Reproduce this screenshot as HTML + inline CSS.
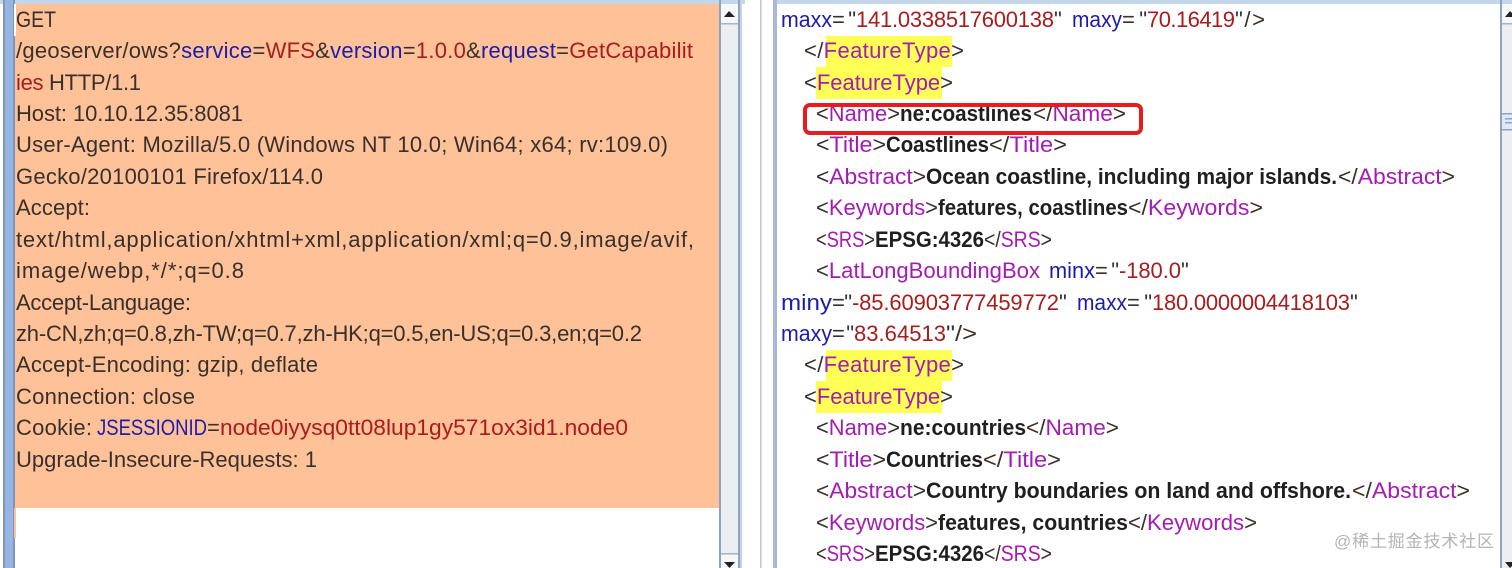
<!DOCTYPE html>
<html><head><meta charset="utf-8"><style>
html,body{margin:0;padding:0;background:#fff;width:1512px;height:568px;overflow:hidden}
svg{display:block;filter:blur(.35px)}
text{font-family:"Liberation Sans",sans-serif;font-size:22px;fill:#38302c}
.n{fill:#1c1caa}.v{fill:#a81c1c}.t{fill:#a41cb4}.b{font-weight:bold;fill:#1f1f1f}
.wm{font-family:"Liberation Sans","Noto Sans CJK SC",sans-serif;font-size:17px;fill:#b4b4b4}
</style></head><body>
<svg width="1512" height="568" viewBox="0 0 1512 568" xmlns="http://www.w3.org/2000/svg">
<rect width="1512" height="568" fill="#fff"/>
<!-- left panel -->
<rect x="0" y="0" width="745" height="4" fill="#c3d6ea"/>
<rect x="3" y="0" width="2" height="568" fill="#8397b4"/>
<rect x="5" y="0" width="8" height="568" fill="#97b5e3"/>
<rect x="13" y="0" width="2" height="568" fill="#7f96b8"/>
<rect x="15" y="4" width="704" height="504" fill="#ffc298"/>
<rect x="15" y="508" width="704" height="60" fill="#fff"/>
<rect x="14" y="508" width="2" height="30" fill="#ffc298"/>
<rect x="14" y="4" width="2" height="32" fill="#fff"/>
<!-- left scrollbar -->
<rect x="719" y="0" width="2" height="568" fill="#8ea3bd"/>
<rect x="721" y="4" width="17" height="564" fill="#eceef1"/>
<rect x="721" y="4" width="17" height="20" fill="#f6f7f8"/>
<rect x="721" y="23" width="17" height="1.5" fill="#a8b4c2"/>
<rect x="721" y="553" width="17" height="1.5" fill="#a8b4c2"/>
<rect x="721" y="555" width="17" height="13" fill="#f6f7f8"/>
<path d="M724 17 L729 11 L735 17 Z" fill="#222"/>
<path d="M724 562 L735 562 L729.5 568 Z" fill="#222"/>
<rect x="738" y="0" width="2" height="568" fill="#8ea3bd"/>
<rect x="740" y="0" width="2" height="568" fill="#c4d2e6"/>
<rect x="760" y="0" width="1.5" height="568" fill="#c4c6c8"/>
<!-- right panel -->
<rect x="773" y="0" width="739" height="4" fill="#c3d6ea"/>
<rect x="773" y="0" width="4" height="568" fill="#a9b8d8"/>
<rect x="1500" y="0" width="2" height="568" fill="#8ea3bd"/>
<rect x="1502" y="4" width="10" height="564" fill="#eceef1"/>
<rect x="1502" y="4" width="10" height="20" fill="#f6f7f8"/>
<rect x="1502" y="23" width="10" height="1.5" fill="#a8b4c2"/>
<rect x="1502" y="113" width="10" height="17" fill="#dfe8f6"/>
<rect x="1502" y="113" width="10" height="1.5" fill="#8ea3c8"/>
<rect x="1502" y="129" width="10" height="1.5" fill="#8ea3c8"/>
<rect x="1505" y="118" width="7" height="1.5" fill="#8ea3c8"/>
<rect x="1505" y="122" width="7" height="1.5" fill="#8ea3c8"/>
<path d="M1505 17 L1510 11 L1512 13 L1512 17 Z" fill="#222"/>
<path d="M1505 562 L1512 562 L1512 566 L1510 568 Z" fill="#222"/>
<!-- highlights -->
<rect x="826" y="36" width="126" height="31" fill="#ffff55"/>
<rect x="816" y="67" width="126" height="32" fill="#ffff55"/>
<rect x="826" y="350" width="126" height="31" fill="#ffff55"/>
<rect x="816" y="381" width="126" height="32" fill="#ffff55"/>
<!-- left text -->
<g>
<text x="16" y="27" textLength="40" lengthAdjust="spacingAndGlyphs">GET</text>
<text x="16" y="58" textLength="677">/geoserver/ows?<tspan class="n">service</tspan>=<tspan class="v">WFS</tspan>&amp;<tspan class="n">version</tspan>=<tspan class="v">1.0.0</tspan>&amp;<tspan class="n">request</tspan>=<tspan class="v">GetCapabilit</tspan></text>
<text x="16" y="90" textLength="125"><tspan class="v">ies</tspan> HTTP/1.1</text>
<text x="16" y="121" textLength="227">Host: 10.10.12.35:8081</text>
<text x="16" y="152" textLength="652">User-Agent: Mozilla/5.0 (Windows NT 10.0; Win64; x64; rv:109.0)</text>
<text x="16" y="184" textLength="307">Gecko/20100101 Firefox/114.0</text>
<text x="16" y="215" textLength="74">Accept:</text>
<text x="16" y="247" textLength="678">text/html,application/xhtml+xml,application/xml;q=0.9,image/avif,</text>
<text x="16" y="278" textLength="228">image/webp,*/*;q=0.8</text>
<text x="16" y="310" textLength="175">Accept-Language:</text>
<text x="16" y="341" textLength="626">zh-CN,zh;q=0.8,zh-TW;q=0.7,zh-HK;q=0.5,en-US;q=0.3,en;q=0.2</text>
<text x="16" y="372" textLength="302">Accept-Encoding: gzip, deflate</text>
<text x="16" y="404" textLength="179">Connection: close</text>
<text x="16" y="435" textLength="76">Cookie:</text>
<text class="n" x="97" y="435" textLength="110" lengthAdjust="spacingAndGlyphs">JSESSIONID</text>
<text x="207" y="435" textLength="13">=</text>
<text class="v" x="220" y="435" textLength="408" lengthAdjust="spacingAndGlyphs">node0iyysq0tt08lup1gy571ox3id1.node0</text>
<text x="16" y="467" textLength="301">Upgrade-Insecure-Requests: 1</text>
</g>
<!-- right text -->
<g>
<text class="n" x="781" y="27" textLength="51" lengthAdjust="spacingAndGlyphs">maxx</text><text x="832" y="27" textLength="24">="</text>
<text class="v" x="856" y="27" textLength="198">141.0338517600138</text><text x="1054" y="27">"</text>
<text class="n" x="1072" y="27" textLength="50" lengthAdjust="spacingAndGlyphs">maxy</text><text x="1122" y="27" textLength="25">="</text>
<text class="v" x="1147" y="27" textLength="88">70.16419</text><text x="1235" y="27" textLength="30">"/&gt;</text>

<text x="804" y="58" textLength="160">&lt;/<tspan class="t">FeatureType</tspan>&gt;</text>
<text x="804" y="90" textLength="149">&lt;<tspan class="t">FeatureType</tspan>&gt;</text>

<text x="816" y="121" textLength="84" lengthAdjust="spacingAndGlyphs">&lt;<tspan class="t">Name</tspan>&gt;</text>
<text class="b" x="900" y="121" textLength="132" lengthAdjust="spacingAndGlyphs">ne:coastlines</text>
<text x="1033" y="121" textLength="93" lengthAdjust="spacingAndGlyphs">&lt;/<tspan class="t">Name</tspan>&gt;</text>

<text x="816" y="152" textLength="70" lengthAdjust="spacingAndGlyphs">&lt;<tspan class="t">Title</tspan>&gt;</text>
<text class="b" x="886" y="152" textLength="103" lengthAdjust="spacingAndGlyphs">Coastlines</text>
<text x="989" y="152" textLength="78" lengthAdjust="spacingAndGlyphs">&lt;/<tspan class="t">Title</tspan>&gt;</text>

<text x="816" y="184" textLength="110" lengthAdjust="spacingAndGlyphs">&lt;<tspan class="t">Abstract</tspan>&gt;</text>
<text class="b" x="926" y="184" textLength="411" lengthAdjust="spacingAndGlyphs">Ocean coastline, including major islands.</text>
<text x="1338" y="184" textLength="117" lengthAdjust="spacingAndGlyphs">&lt;/<tspan class="t">Abstract</tspan>&gt;</text>

<text x="816" y="215" textLength="122" lengthAdjust="spacingAndGlyphs">&lt;<tspan class="t">Keywords</tspan>&gt;</text>
<text class="b" x="938" y="215" textLength="190" lengthAdjust="spacingAndGlyphs">features, coastlines</text>
<text x="1128" y="215" textLength="135" lengthAdjust="spacingAndGlyphs">&lt;/<tspan class="t">Keywords</tspan>&gt;</text>

<text x="816" y="247" textLength="59" lengthAdjust="spacingAndGlyphs">&lt;<tspan class="t">SRS</tspan>&gt;</text>
<text class="b" x="875" y="247" textLength="109" lengthAdjust="spacingAndGlyphs">EPSG:4326</text>
<text x="984" y="247" textLength="68" lengthAdjust="spacingAndGlyphs">&lt;/<tspan class="t">SRS</tspan>&gt;</text>

<text x="816" y="278" textLength="224" lengthAdjust="spacingAndGlyphs">&lt;<tspan class="t">LatLongBoundingBox</tspan></text>
<text class="n" x="1049" y="278" textLength="46" lengthAdjust="spacingAndGlyphs">minx</text><text x="1095" y="278" textLength="24">="</text>
<text class="v" x="1119" y="278" textLength="62">-180.0</text><text x="1181" y="278">"</text>

<text class="n" x="781" y="310" textLength="51" lengthAdjust="spacingAndGlyphs">miny</text><text x="832" y="310" textLength="20">="</text>
<text class="v" x="852" y="310" textLength="207">-85.60903777459772</text><text x="1059" y="310">"</text>
<text class="n" x="1077" y="310" textLength="50" lengthAdjust="spacingAndGlyphs">maxx</text><text x="1127" y="310" textLength="25">="</text>
<text class="v" x="1152" y="310" textLength="198">180.0000004418103</text><text x="1350" y="310">"</text>

<text class="n" x="781" y="341" textLength="51" lengthAdjust="spacingAndGlyphs">maxy</text><text x="832" y="341" textLength="22">="</text>
<text class="v" x="854" y="341" textLength="92">83.64513</text><text x="946" y="341" textLength="31" lengthAdjust="spacingAndGlyphs">"/&gt;</text>

<text x="804" y="372" textLength="160">&lt;/<tspan class="t">FeatureType</tspan>&gt;</text>
<text x="804" y="404" textLength="149">&lt;<tspan class="t">FeatureType</tspan>&gt;</text>

<text x="816" y="435" textLength="84" lengthAdjust="spacingAndGlyphs">&lt;<tspan class="t">Name</tspan>&gt;</text>
<text class="b" x="900" y="435" textLength="126" lengthAdjust="spacingAndGlyphs">ne:countries</text>
<text x="1026" y="435" textLength="93" lengthAdjust="spacingAndGlyphs">&lt;/<tspan class="t">Name</tspan>&gt;</text>

<text x="816" y="467" textLength="70" lengthAdjust="spacingAndGlyphs">&lt;<tspan class="t">Title</tspan>&gt;</text>
<text class="b" x="886" y="467" textLength="97" lengthAdjust="spacingAndGlyphs">Countries</text>
<text x="983" y="467" textLength="78" lengthAdjust="spacingAndGlyphs">&lt;/<tspan class="t">Title</tspan>&gt;</text>

<text x="816" y="498" textLength="110" lengthAdjust="spacingAndGlyphs">&lt;<tspan class="t">Abstract</tspan>&gt;</text>
<text class="b" x="926" y="498" textLength="425" lengthAdjust="spacingAndGlyphs">Country boundaries on land and offshore.</text>
<text x="1352" y="498" textLength="118" lengthAdjust="spacingAndGlyphs">&lt;/<tspan class="t">Abstract</tspan>&gt;</text>

<text x="816" y="530" textLength="122" lengthAdjust="spacingAndGlyphs">&lt;<tspan class="t">Keywords</tspan>&gt;</text>
<text class="b" x="938" y="530" textLength="190" lengthAdjust="spacingAndGlyphs">features, countries</text>
<text x="1128" y="530" textLength="129" lengthAdjust="spacingAndGlyphs">&lt;/<tspan class="t">Keywords</tspan>&gt;</text>

<text x="816" y="561" textLength="59" lengthAdjust="spacingAndGlyphs">&lt;<tspan class="t">SRS</tspan>&gt;</text>
<text class="b" x="875" y="561" textLength="109" lengthAdjust="spacingAndGlyphs">EPSG:4326</text>
<text x="984" y="561" textLength="68" lengthAdjust="spacingAndGlyphs">&lt;/<tspan class="t">SRS</tspan>&gt;</text>
</g>
<!-- red box -->
<rect x="805" y="105" width="336" height="28" rx="5" fill="none" stroke="#e81c1c" stroke-width="4"/>
<text class="wm" x="1334" y="547" textLength="160">@稀土掘金技术社区</text>
</svg>
</body></html>
